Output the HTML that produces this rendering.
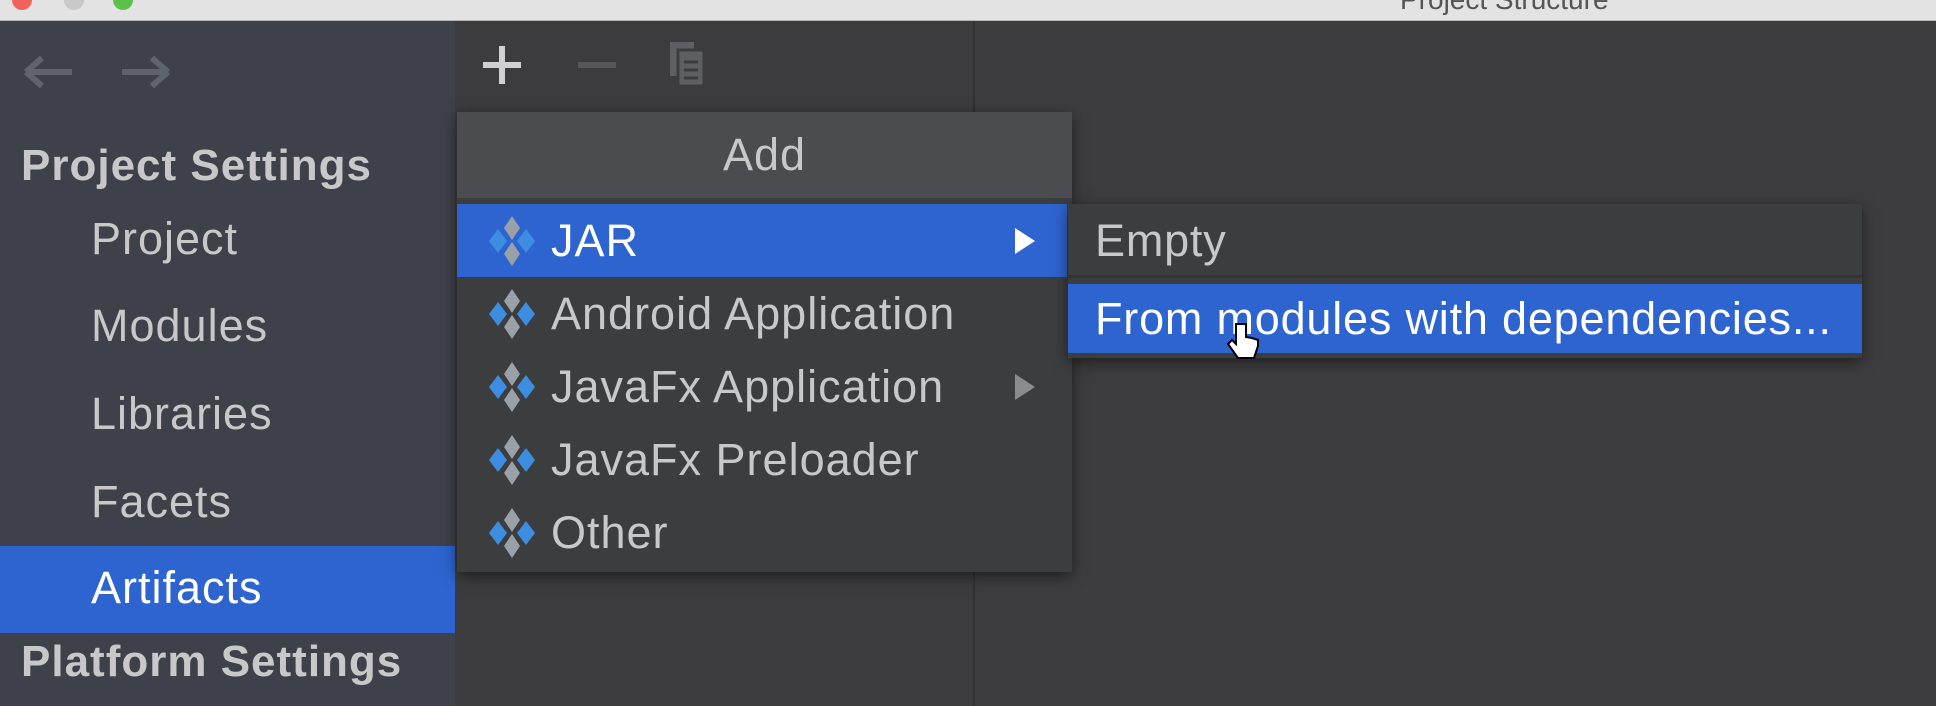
<!DOCTYPE html>
<html><head><style>
*{margin:0;padding:0;box-sizing:border-box}
body{width:1936px;height:706px;overflow:hidden;background:#3c3c3e;font-family:"Liberation Sans",sans-serif;position:relative}
.abs{position:absolute}
#title{left:0;top:0;width:1936px;height:21px;background:#e3e3e3;border-bottom:1px solid #b8b8b8}
#side{left:0;top:21px;width:455px;height:685px;background:#3e414a}
#mid{left:455px;top:21px;width:520px;height:685px;background:#3c3c3e;border-right:2px solid #323234}
#right{left:977px;top:21px;width:959px;height:685px;background:#3d3d3f}
.st{color:#c8c8c8;font-size:44px;font-weight:bold;left:21px;letter-spacing:1px}
.it{color:#c8c8c8;font-size:45px;left:91px;letter-spacing:1px}
#art{left:0;top:546px;width:455px;height:87px;background:#2d64cf}
#pop{left:457px;top:112px;width:615px;height:460px;background:#3c3d3f;box-shadow:0 4px 14px rgba(0,0,0,.5)}
#hdr{left:0;top:0;width:615px;height:86px;background:#4a4c4f;color:#c8c8c8;font-size:45px;letter-spacing:1px;text-align:center;line-height:86px}
.row{left:0;width:610px;height:73px;color:#c8c8c8;font-size:45px;letter-spacing:1px;line-height:73px;padding-left:94px}
.sel{background:#2d64cf;color:#fff}
.ico{position:absolute;left:28px;top:10px}
#sub{left:1068px;top:204px;width:794px;height:154px;background:#3c3d3f;box-shadow:0 4px 14px rgba(0,0,0,.5)}
.srow{left:0;width:794px;color:#c8c8c8;font-size:45px;letter-spacing:0.8px;padding-left:27px}
</style></head><body>
<div id="title" class="abs"></div>
<div class="abs" style="left:12px;top:-10px;width:20px;height:20px;border-radius:50%;background:#f0625a"></div>
<div class="abs" style="left:64px;top:-10px;width:20px;height:20px;border-radius:50%;background:#c9c9c9"></div>
<div class="abs" style="left:113px;top:-10px;width:20px;height:20px;border-radius:50%;background:#5cbf4a"></div>
<div class="abs" style="left:1400px;top:-16px;font-size:28px;color:#555">Project Structure</div>
<div id="side" class="abs"></div>
<div id="mid" class="abs"></div>
<div id="right" class="abs"></div>
<svg class="abs" style="left:20px;top:50px" width="160" height="44"><g stroke="#5f636b" stroke-width="6" fill="none"><path d="M6 22H52M6 22L22 8M6 22L22 36"/><path d="M102 22H148M148 22L132 8M148 22L132 36"/></g></svg>
<svg class="abs" style="left:480px;top:40px" width="240" height="50"><g stroke="#d0d0d0" stroke-width="6"><path d="M22 6V44M3 25H41"/></g><path d="M98 25H136" stroke="#55575b" stroke-width="6"/><g fill="#5d5f63"><rect x="190" y="2" width="24" height="34"/><rect x="198" y="10" width="26" height="36" stroke="#3c3c3e" stroke-width="3"/></g><g stroke="#3c3c3e" stroke-width="3"><path d="M204 22H218M204 30H218M204 38H218"/></g></svg>
<div class="abs st" style="top:141px">Project Settings</div>
<div class="abs it" style="top:213px">Project</div>
<div class="abs it" style="top:300px">Modules</div>
<div class="abs it" style="top:388px">Libraries</div>
<div class="abs it" style="top:476px">Facets</div>
<div id="art" class="abs"></div>
<div class="abs it" style="top:562px;color:#fff">Artifacts</div>
<div class="abs st" style="top:637px">Platform Settings</div>
<div id="pop" class="abs">
<div id="hdr" class="abs">Add</div>
<div class="abs row sel" style="top:92px"><svg class="ico" width="54" height="54"><path d="M27 2L35 14L27 26L19 14Z" fill="#9aa0a8"/><path d="M27 28L35 40L27 52L19 40Z" fill="#9aa0a8"/><path d="M13 15L22 27L13 39L4 27Z" fill="#3d8ee0"/><path d="M41 15L50 27L41 39L32 27Z" fill="#3d8ee0"/></svg>JAR<svg class="abs" style="left:556px;top:22px" width="24" height="30"><path d="M2 2L22 15L2 28Z" fill="#fff"/></svg></div>
<div class="abs row" style="top:165px"><svg class="ico" width="54" height="54"><path d="M27 2L35 14L27 26L19 14Z" fill="#9aa0a8"/><path d="M27 28L35 40L27 52L19 40Z" fill="#9aa0a8"/><path d="M13 15L22 27L13 39L4 27Z" fill="#3d8ee0"/><path d="M41 15L50 27L41 39L32 27Z" fill="#3d8ee0"/></svg>Android Application</div>
<div class="abs row" style="top:238px"><svg class="ico" width="54" height="54"><path d="M27 2L35 14L27 26L19 14Z" fill="#9aa0a8"/><path d="M27 28L35 40L27 52L19 40Z" fill="#9aa0a8"/><path d="M13 15L22 27L13 39L4 27Z" fill="#3d8ee0"/><path d="M41 15L50 27L41 39L32 27Z" fill="#3d8ee0"/></svg>JavaFx Application<svg class="abs" style="left:556px;top:22px" width="24" height="30"><path d="M2 2L22 15L2 28Z" fill="#8a8c90"/></svg></div>
<div class="abs row" style="top:311px"><svg class="ico" width="54" height="54"><path d="M27 2L35 14L27 26L19 14Z" fill="#9aa0a8"/><path d="M27 28L35 40L27 52L19 40Z" fill="#9aa0a8"/><path d="M13 15L22 27L13 39L4 27Z" fill="#3d8ee0"/><path d="M41 15L50 27L41 39L32 27Z" fill="#3d8ee0"/></svg>JavaFx Preloader</div>
<div class="abs row" style="top:384px"><svg class="ico" width="54" height="54"><path d="M27 2L35 14L27 26L19 14Z" fill="#9aa0a8"/><path d="M27 28L35 40L27 52L19 40Z" fill="#9aa0a8"/><path d="M13 15L22 27L13 39L4 27Z" fill="#3d8ee0"/><path d="M41 15L50 27L41 39L32 27Z" fill="#3d8ee0"/></svg>Other</div>
</div>
<div id="sub" class="abs">
<div class="abs srow" style="top:0;height:74px;line-height:74px;border-bottom:3px solid #333">Empty</div>
<div class="abs srow sel" style="top:80px;height:69px;line-height:69px;color:#fff">From modules with dependencies...</div>
</div>
<svg class="abs" style="left:1226px;top:320px" width="34" height="42"><path d="M10 4v20l-4-4-4 4 10 14h16l4-12V20l-6-2-6-1V4z" fill="#fff" stroke="#000" stroke-width="2"/></svg>
</body></html>
